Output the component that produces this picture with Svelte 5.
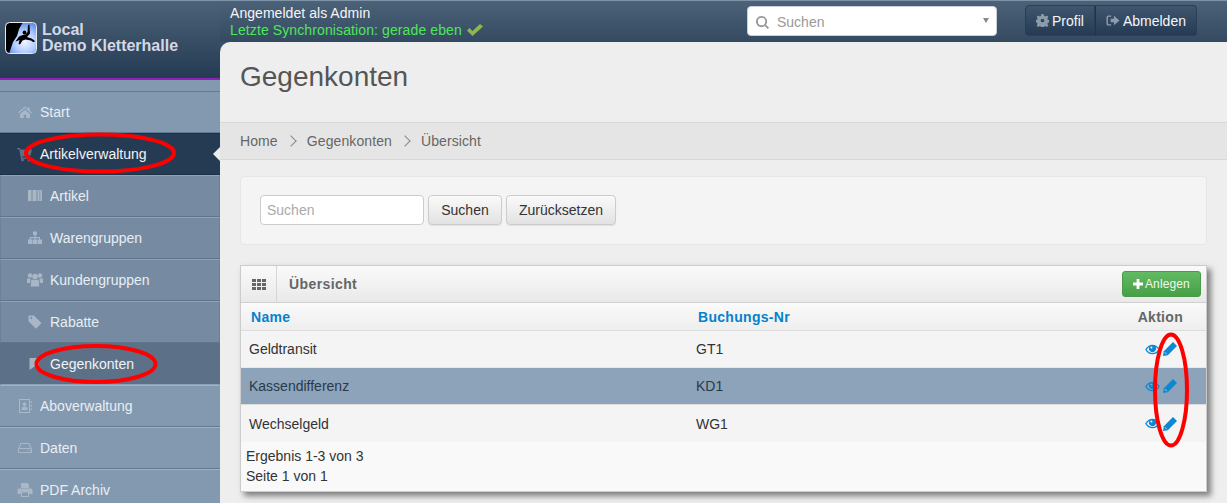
<script>
  const nav = [
    { label: 'Start', icon: 'home', cls: 'top' },
    { label: 'Artikelverwaltung', icon: 'cart', cls: 'top open' },
    { label: 'Artikel', icon: 'barcode', cls: 'sub' },
    { label: 'Warengruppen', icon: 'sitemap', cls: 'sub' },
    { label: 'Kundengruppen', icon: 'group', cls: 'sub' },
    { label: 'Rabatte', icon: 'tag', cls: 'sub' },
    { label: 'Gegenkonten', icon: 'bookmark', cls: 'sub current' },
    { label: 'Aboverwaltung', icon: 'book', cls: 'top' },
    { label: 'Daten', icon: 'hdd', cls: 'top' },
    { label: 'PDF Archiv', icon: 'print', cls: 'top' }
  ];
  const rows = [
    { name: 'Geldtransit', nr: 'GT1' },
    { name: 'Kassendifferenz', nr: 'KD1', hover: true },
    { name: 'Wechselgeld', nr: 'WG1' }
  ];
</script>

{#snippet icon(name)}
  <svg class="ico" viewBox="0 0 16 16" aria-hidden="true">
    {#if name === 'home'}
      <path d="M8 2.500 1 8.500l.7.9L8 4.100l6.300 5.300.7-.9-2.500-2.100V3.500h-2v1.500L8 2.500ZM3 10v4h3.700v-3.200h2.600V14H13v-4L8 5.700 3 10Z" />
    {:else if name === 'cart'}
      <path d="M0 2h3l.5 1.500H15l-1.500 6-8.500 1 .3 1H13v1.200H4L2.200 3.200H0V2Z" /><circle cx="5.500" cy="14" r="1.400" /><circle cx="12" cy="14" r="1.400" />
    {:else if name === 'barcode'}
      <path d="M1 2h14v11H1z" opacity=".55" /><path d="M1 2h3v11H1zM6 2h3v11H6zM11 2h1v11h-1zM13.500 2H15v11h-1.500z" />
    {:else if name === 'sitemap'}
      <path d="M6 1.500h4v3.500H8.600v2H13v2.500h2V14h-4.500V9.500h1.500V8.200H8.600v1.300h1.400V14H6V9.500h1.400V8.200H4v1.300h1.500V14H1V9.500h1.800V7h4.600V5H6V1.500Z" />
    {:else if name === 'group'}
      <circle cx="3" cy="3.500" r="2.200" /><circle cx="13" cy="3.500" r="2.200" /><circle cx="8" cy="4.500" r="2.800" /><path d="M0 6.500h3.500L3.200 11H0V6.500ZM12.500 6.500H16V11h-3.200l-.3-4.500ZM4.300 7.800h7.400l.6 6.700H3.700l.6-6.700Z" />
    {:else if name === 'tag'}
      <path fill-rule="evenodd" d="M1.500 1.500h5.500l7.500 7.700-5.500 5.600-7.500-7.500V1.500Zm2.700 1.600a1 1 0 1 0 0 2 1 1 0 0 0 0-2Z" />
    {:else if name === 'bookmark'}
      <path d="M2.500 2h9.500v12L7.500 10.500 2.500 14V2Z" />
    {:else if name === 'book'}
      <path fill-rule="evenodd" d="M2 1h11v14H2V1Zm1 1v12h9V2H3Zm10.500 1.500H15v1.500h-1.500V3.500Zm0 3.500H15v1.500h-1.500V7Zm0 3.500H15V12h-1.500v-1.500ZM7.500 4.500a1.800 1.800 0 1 1 0 3.600 1.800 1.800 0 0 1 0-3.600ZM4.500 12c0-2.500 1-3.500 3-3.500s3 1 3 3.500h-6Z" />
    {:else if name === 'hdd'}
      <path fill-rule="evenodd" d="M3.500 3h9L15 9v4H1V9l2.500-6Zm.7 1L2.600 8h10.800l-1.600-4H4.200ZM2 9v3h12V9H2Zm8.500 1h1v1h-1v-1Zm2 0h1v1h-1v-1Z" />
    {:else if name === 'print'}
      <path d="M4 1h6.500L12 2.500V6H4V1ZM2 6.500h12a1.500 1.500 0 0 1 1.500 1.500v4H12v3H4v-3H.500V8A1.500 1.500 0 0 1 2 6.500Zm3 4V14h6v-3.500H5Z" />
    {/if}
  </svg>
{/snippet}

{#snippet eye()}
  <svg class="act eye" viewBox="0 0 16 12" aria-hidden="true"><path fill-rule="evenodd" d="M0 6c2-3.600 4.800-5.300 8-5.300s6 1.700 8 5.300c-2 3.600-4.800 5.300-8 5.300S2 9.600 0 6Zm1.600 0C3 8.300 5.200 9.900 8 9.900s5-1.600 6.400-3.900c-.9-1.400-1.900-2.400-3.100-3.100a3.900 3.900 0 1 1-6.600 0C3.500 3.600 2.500 4.600 1.600 6Zm5.200-3.300a1.100 1.100 0 0 0 0 2.200 1.100 1.100 0 0 0 0-2.200Z" /></svg>
{/snippet}

{#snippet pencil()}
  <svg class="act" viewBox="0 0 14 14" aria-hidden="true"><path d="M10 0 14 4 4.800 13.200 0 14 .8 9.200 10 0Z" /><path d="M1.800 10.200l2 2" stroke="#f4f4f4" stroke-width=".7" fill="none" /></svg>
{/snippet}

<div class="app">
  <aside class="side">
    <div class="brand">
      <svg class="logo" viewBox="0 0 32 32" aria-hidden="true">
        <defs>
          <radialGradient id="sky" cx="0.62" cy="0.62" r="0.62"><stop offset="0" stop-color="#f2f6ff" /><stop offset="0.55" stop-color="#b0ccff" /><stop offset="1" stop-color="#5d8de8" /></radialGradient>
          <clipPath id="round"><rect x="1" y="1" width="30" height="30" rx="3.500" /></clipPath>
        </defs>
        <g clip-path="url(#round)">
          <rect width="32" height="32" fill="url(#sky)" />
          <path d="M0 0h18L14 7l-2 7-4 6-4 12H0V0Z" fill="#000" />
          <path d="M10.500 19.500 14 14.500l3.500-1.500 3-.5 2-2.500.5-7 1.500-.5.5 9-3 3.500 4.500 1.500 3 2v1.500l-1.500 0-2-1.500-5.500-1-3 1-2.500 4-1.500-.5 1-4-3.500 1.500Z" fill="#000" />
          <circle cx="19.500" cy="10.500" r="1.900" fill="#000" />
        </g>
        <rect x="0.500" y="0.500" width="31" height="31" rx="4" fill="none" stroke="#e8e8f0" />
      </svg>
      <div class="brand-text">Local<br />Demo Kletterhalle</div>
    </div>
    <nav class="nav">
      {#each nav as item}
        <a class="item {item.cls}" href="#x">
          <span class="ico-wrap">{@render icon(item.icon)}</span>
          <span>{item.label}</span>
        </a>
      {/each}
    </nav>
  </aside>

  <div class="col">
    <header class="top-bar">
      <div class="status">
        <div>Angemeldet als Admin</div>
        <div class="sync">Letzte Synchronisation: gerade eben
          <svg class="check" viewBox="0 0 16 12" aria-hidden="true"><path d="M0 6.500 2.500 4l3 3L13 0l3 2.500L5.500 12 0 6.500Z" /></svg>
        </div>
      </div>
      <div class="select">
        <svg class="search-ico" viewBox="0 0 14 14" aria-hidden="true"><path fill-rule="evenodd" d="M6 0a6 6 0 0 1 4.800 9.500l3.200 3.200-1.400 1.400-3.200-3.200A6 6 0 1 1 6 0Zm0 2a4 4 0 1 0 0 8 4 4 0 0 0 0-8Z" /></svg>
        <span class="ph">Suchen</span>
        <span class="caret"></span>
      </div>
      <div class="btn-group">
        <button class="dark">
          <svg class="dark-ico" viewBox="0 0 14 14" aria-hidden="true"><path fill-rule="evenodd" d="M5.800 0h2.400l.4 2 1.300.6 1.700-1.100 1.700 1.700-1.100 1.700.6 1.300 2 .4v2.400l-2 .4-.6 1.300 1.100 1.700-1.700 1.700-1.700-1.100-1.300.6-.4 2H5.800l-.4-2-1.300-.6-1.700 1.100L.7 12.400l1.100-1.700-.6-1.300-2-.4V6.600l2-.4.600-1.300L.7 3.200 2.400 1.500l1.700 1.100 1.300-.6.400-2ZM7 5a2 2 0 1 0 0 4 2 2 0 0 0 0-4Z" /></svg>
          Profil
        </button>
        <button class="dark">
          <svg class="dark-ico wide" viewBox="0 0 14 14" aria-hidden="true"><path d="M0 3.500A2 2 0 0 1 2 1.500h3v1.500H2.500a1 1 0 0 0-1 1v6a1 1 0 0 0 1 1H5v1.500H2a2 2 0 0 1-2-2v-6.500Z" /><path d="M4.500 5H8V2l6 5-6 5V9H4.500V5Z" /></svg>
          Abmelden
        </button>
      </div>
    </header>

    <main class="main">
      <div class="page-head"><h1>Gegenkonten</h1></div>
      <div class="crumbs">
        <span>Home</span><span class="sep"></span><span>Gegenkonten</span><span class="sep"></span><span>Übersicht</span>
      </div>
      <div class="content">
        <div class="filter">
          <input type="text" placeholder="Suchen" />
          <button class="light w1">Suchen</button>
          <button class="light w2">Zurücksetzen</button>
        </div>

        <section class="box">
          <div class="box-head">
            <div class="box-ico">
              <svg viewBox="0 0 14 11" aria-hidden="true"><path d="M0 0h4v3H0zM5 0h4v3H5zM10 0h4v3h-4zM0 4h4v3H0zM5 4h4v3H5zM10 4h4v3h-4zM0 8h4v3H0zM5 8h4v3H5zM10 8h4v3h-4z" /></svg>
            </div>
            <div class="box-title">Übersicht</div>
            <button class="green">
              <svg viewBox="0 0 10 10" aria-hidden="true"><path d="M3.600 0h2.800v3.600H10v2.800H6.400V10H3.600V6.400H0V3.600h3.600V0Z" /></svg>
              Anlegen
            </button>
          </div>
          <div class="row thead">
            <div class="c1"><b>Name</b></div>
            <div class="c2"><b>Buchungs-Nr</b></div>
            <div class="c3"><b>Aktion</b></div>
          </div>
          {#each rows as r}
            <div class="row data" class:hover={r.hover}>
              <div class="c1">{r.name}</div>
              <div class="c2">{r.nr}</div>
              <div class="c3 icons">{@render eye()}{@render pencil()}</div>
            </div>
          {/each}
          <div class="foot">Ergebnis 1-3 von 3<br />Seite 1 von 1</div>
        </section>
      </div>
    </main>
  </div>

  <svg class="marks" viewBox="0 0 1227 503" aria-hidden="true">
    <ellipse cx="100" cy="153" rx="74" ry="18.500" />
    <ellipse cx="96" cy="364" rx="59.500" ry="18" />
    <ellipse cx="1171" cy="390" rx="16" ry="55.500" />
  </svg>
</div>

<style>
  :global(body) { margin: 0; background: #eee; }
  .app {
    position: relative;
    display: flex;
    width: 1227px;
    height: 503px;
    overflow: hidden;
    font: 14px/20px "Liberation Sans", Arial, sans-serif;
    color: #333;
    background: #3a5068;
  }
  .side { width: 220px; flex: none; background: #8399b0; }
  .brand {
    display: flex;
    align-items: center;
    gap: 5px;
    box-sizing: border-box;
    height: 80px;
    padding: 0 0 4px 5px;
    background: linear-gradient(#4c6278, #253b53);
    border-top: 1px solid #7f93a8;
    border-bottom: 2px solid #9021b8;
  }
  .logo { width: 32px; height: 32px; flex: none; }
  .brand-text { font-weight: 700; font-size: 16px; line-height: 16px; color: #d3d8e6; }
  .nav { padding-top: 11px; }
  .item {
    display: flex;
    align-items: center;
    box-sizing: border-box;
    height: 42px;
    padding-left: 17px;
    color: #e8eef5;
    text-decoration: none;
    background: #8399b0;
    border-top: 1px solid #a0b1c3;
    border-bottom: 1px solid #627a93;
  }
  .nav .item:first-child { border-top-color: #627a93; border-bottom-color: #627a93; }
  .ico-wrap { display: flex; justify-content: center; width: 16px; margin-right: 7px; }
  .ico { width: 16px; height: 16px; fill: #a9b8c8; flex: none; }
  .sub { padding-left: 26px; background: #768ba1; border-left: 1px solid #6c8197; border-right: 1px solid #6c8197; border-top-color: #8fa2b6; border-bottom-color: #5f758c; }
  .sub .ico { fill: #a8b6c5; }
  .open { position: relative; background: #253b53; color: #f1f4f8; border-top-color: #1c3046; border-bottom-color: #1c3046; }
  .open .ico { fill: #5d7186; }
  .open::after {
    content: "";
    position: absolute;
    right: 0;
    top: 13px;
    border: 7px solid transparent;
    border-right-color: #eee;
    border-left-width: 0;
  }
  .current { background: #5c7188; border-color: #5c7188; border-bottom-color: #8ea2b6; color: #f0f3f7; }
  .current .ico { fill: #a5b2c0; }

  .col { flex: 1; min-width: 0; display: flex; flex-direction: column; }
  .top-bar {
    display: flex;
    align-items: flex-start;
    box-sizing: border-box;
    height: 42px;
    padding-left: 10px;
    background: linear-gradient(#4c6278, #344a61);
    border-top: 1px solid #7f93a8;
    color: #f4f6f8;
  }
  .status { width: 517px; height: 35px; padding-top: 4px; line-height: 17px; flex: none; letter-spacing: .05px; }
  .sync { color: #4fe65a; letter-spacing: .11px; }
  .check { width: 16px; height: 12px; fill: #8fb84a; vertical-align: -1px; margin-left: 1px; }
  .select {
    display: flex;
    align-items: center;
    box-sizing: border-box;
    width: 250px;
    height: 30px;
    margin-top: 5px;
    padding: 2px 7px 0 8px;
    background: #fff;
    border: 1px solid #ccd;
    border-radius: 4px;
    flex: none;
  }
  .search-ico { width: 13px; height: 13px; fill: #999; margin-right: 8px; }
  .ph { flex: 1; color: #999; }
  .caret { border: 3px solid transparent; border-top: 5px solid #888; border-bottom: 0; margin-bottom: 4px; }
  .btn-group { display: flex; margin: 4px 0 0 28px; }
  .dark {
    display: flex;
    align-items: center;
    gap: 3px;
    box-sizing: border-box;
    height: 31px;
    padding: 0 10px;
    font: inherit;
    color: #f4f6f8;
    background: linear-gradient(#3f566e, #253b53);
    border: 1px solid #2a3f56;
    border-radius: 4px 0 0 4px;
  }
  .dark + .dark { border-left-color: #1f3349; border-radius: 0 4px 4px 0; }
  .dark-ico { width: 13px; height: 13px; fill: #8d9cab; }
  .dark-ico.wide { width: 14px; }

  .main { flex: 1; min-height: 0; background: #eee; border-radius: 10px 0 0 0; }
  .page-head { height: 80px; box-sizing: border-box; padding: 19px 20px 0; }
  h1 { margin: 0; font-size: 28px; line-height: 32px; font-weight: 400; color: #555; }
  .crumbs {
    display: flex;
    align-items: center;
    box-sizing: border-box;
    height: 38px;
    padding-left: 20px;
    color: #666;
    letter-spacing: .1px;
    background: #e5e5e5;
    border-top: 1px solid #d8d8d8;
    border-bottom: 1px solid #d8d8d8;
  }
  .sep {
    width: 7px;
    height: 7px;
    margin: 0 12px 0 9px;
    border-top: 1px solid #888;
    border-right: 1px solid #888;
    transform: rotate(45deg);
  }
  .content { padding: 16px 20px 0; }
  .filter {
    display: flex;
    align-items: center;
    gap: 4px;
    box-sizing: border-box;
    height: 69px;
    padding: 0 19px 1px;
    background: #f4f4f4;
    border: 1px solid #e6e6e6;
    border-radius: 4px;
  }
  input {
    box-sizing: border-box;
    width: 164px;
    height: 30px;
    padding: 0 6px;
    font: inherit;
    background: #fff;
    border: 1px solid #ccc;
    border-radius: 4px;
    outline: none;
  }
  input::placeholder { color: #aaa; opacity: 1; }
  .light {
    box-sizing: border-box;
    height: 30px;
    padding: 0;
    font: inherit;
    color: #333;
    background: linear-gradient(#fafafa, #e2e2e2);
    border: 1px solid #ccc;
    border-radius: 4px;
    box-shadow: 0 1px 1px rgba(0,0,0,.08);
  }
  .w1 { width: 74px; }
  .w2 { width: 110px; }
  .box {
    box-sizing: border-box;
    height: 227px;
    margin-top: 20px;
    background: #f9f9f9;
    border: 1px solid #ccc;
    box-shadow: 4px 4px 6px #7d7d7d;
  }
  .box-head {
    display: flex;
    align-items: center;
    box-sizing: border-box;
    height: 37px;
    background: linear-gradient(#fafafa, #e9e9e9);
    border-bottom: 1px solid #d0d0d0;
  }
  .box-ico {
    display: flex;
    align-items: center;
    justify-content: center;
    box-sizing: border-box;
    width: 36px;
    height: 100%;
    border-right: 1px solid #d6d6d6;
  }
  .box-ico svg { width: 14px; height: 11px; fill: #666; }
  .box-title { flex: 1; padding-left: 12px; font-weight: 700; font-size: 14px; letter-spacing: .4px; color: #666; }
  .green {
    display: flex;
    align-items: center;
    gap: 2px;
    box-sizing: border-box;
    width: 79px;
    height: 26px;
    margin-right: 5px;
    padding: 0 0 0 10px;
    font: 12px/1 "Liberation Sans", Arial, sans-serif;
    letter-spacing: .1px;
    color: #eef8ee;
    background: linear-gradient(#62bb62, #47a047);
    border: 1px solid #4a9a4a;
    border-radius: 3px;
  }
  .green svg { width: 10px; height: 10px; fill: #fff; }
  .row { display: flex; align-items: center; box-sizing: border-box; }
  .thead { height: 28px; background: linear-gradient(#fafafa, #eee); border-bottom: 1px solid #ddd; }
  .thead b { color: #0482cc; letter-spacing: .3px; font-size: 14px; }
  .thead .c1 { padding-left: 10px; }
  .thead .c2 { padding-left: 2px; }
  .thead .c3 { text-align: right; padding-right: 23px; box-sizing: border-box; }
  .thead .c3 b { color: #666; }
  .data { height: 37px; background: #f4f4f4; border-bottom: 1px solid #e8e8e8; }
  .data .c1 { padding-left: 8px; }
  .data:has(+ .foot) { border-bottom: 0; }
  .hover { background: #8ca3ba; border-bottom-color: #dcdcdc; color: #2a3a4a; }
  .c1 { width: 455px; box-sizing: border-box; flex: none; }
  .c2 { flex: 1; }
  .c3 { width: 93px; flex: none; }
  .icons { display: flex; align-items: center; justify-content: flex-end; gap: 3px; padding-right: 29px; box-sizing: border-box; }
  .act { width: 14px; height: 14px; fill: #0f87d2; }
  .eye { width: 15px; height: 11px; }
  .foot { padding: 4px 5px; line-height: 20px; }
  .marks {
    position: absolute;
    inset: 0;
    width: 1227px;
    height: 503px;
    pointer-events: none;
    fill: none;
    stroke: #f00;
    stroke-width: 4;
  }
</style>
